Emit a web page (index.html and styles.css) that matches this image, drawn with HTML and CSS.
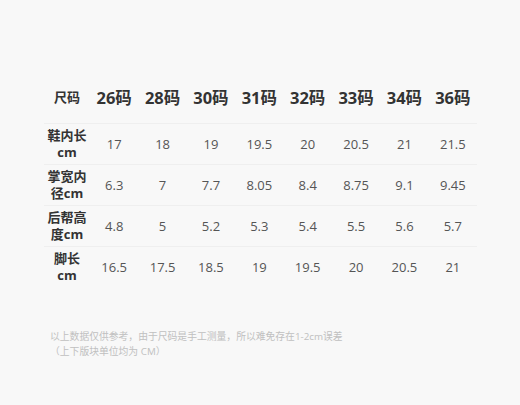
FILE: index.html
```html
<!DOCTYPE html>
<html lang="zh">
<head>
<meta charset="utf-8">
<link rel="stylesheet" href="styles.css">
</head>
<body>
<div class="page">
  <div class="table">
    <div class="row head">
      <div class="cell label">尺码</div>
      <div class="cell size">26码</div>
      <div class="cell size">28码</div>
      <div class="cell size">30码</div>
      <div class="cell size">31码</div>
      <div class="cell size">32码</div>
      <div class="cell size">33码</div>
      <div class="cell size">34码</div>
      <div class="cell size">36码</div>
    </div>
    <div class="row line">
      <div class="cell label">鞋内长<br>cm</div>
      <div class="cell val">17</div><div class="cell val">18</div><div class="cell val">19</div><div class="cell val">19.5</div>
      <div class="cell val">20</div><div class="cell val">20.5</div><div class="cell val">21</div><div class="cell val">21.5</div>
    </div>
    <div class="row line">
      <div class="cell label">掌宽内<br>径cm</div>
      <div class="cell val">6.3</div><div class="cell val">7</div><div class="cell val">7.7</div><div class="cell val">8.05</div>
      <div class="cell val">8.4</div><div class="cell val">8.75</div><div class="cell val">9.1</div><div class="cell val">9.45</div>
    </div>
    <div class="row line">
      <div class="cell label">后帮高<br>度cm</div>
      <div class="cell val">4.8</div><div class="cell val">5</div><div class="cell val">5.2</div><div class="cell val">5.3</div>
      <div class="cell val">5.4</div><div class="cell val">5.5</div><div class="cell val">5.6</div><div class="cell val">5.7</div>
    </div>
    <div class="row line">
      <div class="cell label">脚长<br>cm</div>
      <div class="cell val">16.5</div><div class="cell val">17.5</div><div class="cell val">18.5</div><div class="cell val">19</div>
      <div class="cell val">19.5</div><div class="cell val">20</div><div class="cell val">20.5</div><div class="cell val">21</div>
    </div>
  </div>
  <div class="note">
    <p>以上数据仅供参考，由于尺码是手工测量，所以难免存在1-2cm误差</p>
    <p>（上下版块单位均为 CM）</p>
  </div>
</div>
</body>
</html>
```
FILE: styles.css
```css
html, body {
  margin: 0;
  padding: 0;
  background: #f8f8f8;
}
body {
  font-family: "Open Sans", "Noto Sans CJK SC", sans-serif;
  width: 520px;
  height: 405px;
  overflow: hidden;
}
.page {
  padding: 82px 0 0 44px;
}
.table {
  width: 433px;
}
.row {
  display: grid;
  grid-template-columns: 46px repeat(8, 1fr);
  align-items: center;
  height: 41px;
  box-sizing: border-box;
}
.row.head {
  padding-bottom: 11px;
}
.row.line {
  border-top: 1px solid #efefef;
}
.cell {
  text-align: center;
}
.label {
  font-size: 13px;
  line-height: 17px;
  font-weight: 700;
  color: #333;
}
.size {
  font-size: 16.5px;
  font-weight: 700;
  color: #333;
}
.val {
  font-size: 13px;
  color: #555;
}
.note {
  margin: 42px 0 0 6px;
  font-size: 9.8px;
  line-height: 15px;
  color: #c0c0c0;
}
.note p {
  margin: 0;
}
```
